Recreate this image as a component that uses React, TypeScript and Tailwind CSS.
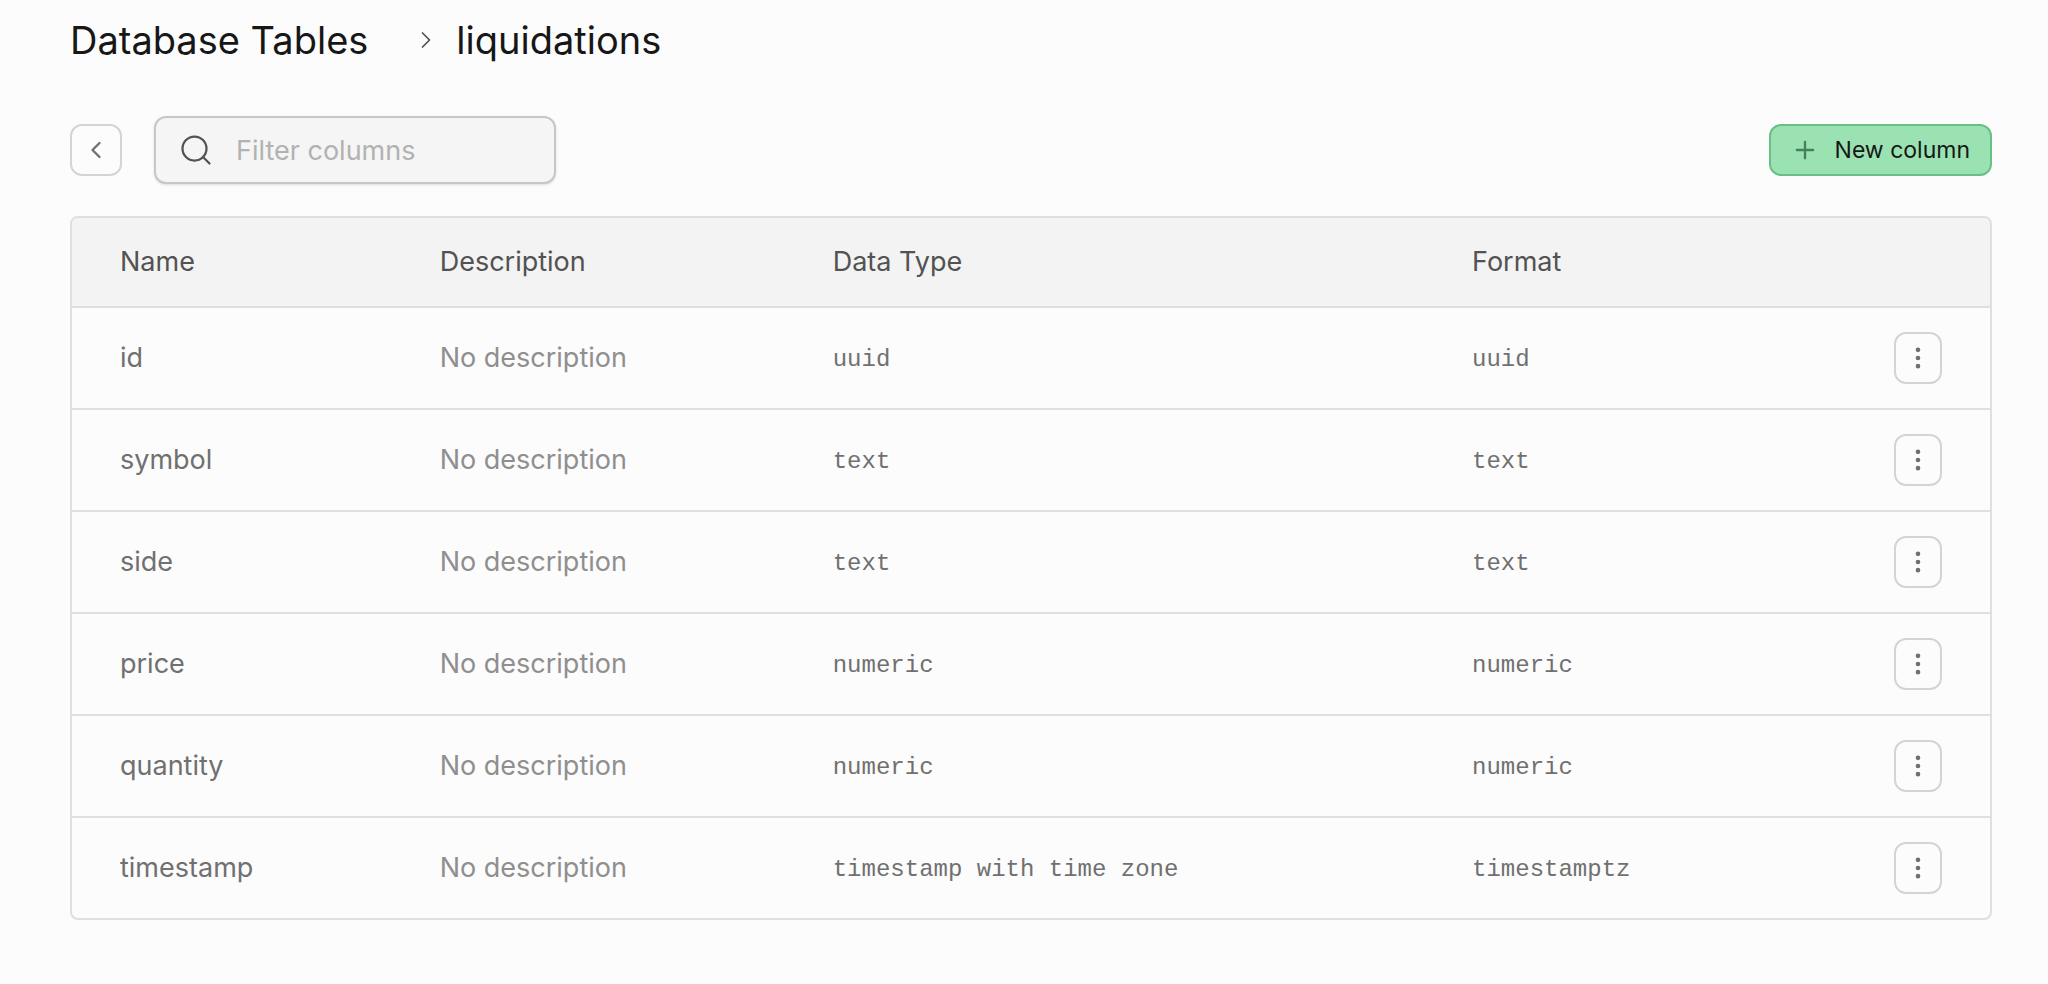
import { ChangeEvent, useState } from "react";
import {
  ChevronLeft,
  ChevronRight,
  EllipsisVertical,
  Plus,
  Search,
} from "lucide-react";

interface Column {
  name: string;
  description?: string;
  dataType: string;
  format: string;
}

const columns: Column[] = [
  { name: "id", dataType: "uuid", format: "uuid" },
  { name: "symbol", dataType: "text", format: "text" },
  { name: "side", dataType: "text", format: "text" },
  { name: "price", dataType: "numeric", format: "numeric" },
  { name: "quantity", dataType: "numeric", format: "numeric" },
  {
    name: "timestamp",
    dataType: "timestamp with time zone",
    format: "timestamptz",
  },
];

function Breadcrumb() {
  return (
    <nav className="flex items-center text-[38px] leading-[48px] text-[#171717]">
      <a href="#">Database Tables</a>
      <ChevronRight
        size={28}
        strokeWidth={1.5}
        className="ml-11 mr-4 text-[#525252]"
      />
      <h1>liquidations</h1>
    </nav>
  );
}

interface ToolbarProps {
  filter: string;
  onFilterChange: (value: string) => void;
}

function Toolbar({ filter, onFilterChange }: ToolbarProps) {
  return (
    <div className="mt-[52px] flex items-center justify-between">
      <div className="flex items-center gap-8">
        <button
          type="button"
          aria-label="Back to tables"
          className="flex size-[52px] items-center justify-center rounded-xl border-2 border-[#d4d4d4] text-[#707070]"
        >
          <ChevronLeft size={28} strokeWidth={2} />
        </button>
        <div className="relative">
          <Search
            size={36}
            strokeWidth={1.5}
            className="pointer-events-none absolute left-6 top-4 text-[#525252]"
          />
          <input
            type="text"
            aria-label="Filter columns"
            placeholder="Filter columns"
            value={filter}
            onChange={(event: ChangeEvent<HTMLInputElement>) => {
              onFilterChange(event.target.value);
            }}
            className="h-[68px] w-[402px] rounded-xl border-2 border-[#c7c7c7] bg-[#f5f5f5] pl-20 pr-6 text-[27px] text-[#171717] shadow-sm placeholder:text-[#b2b2b2] focus:outline-none"
          />
        </div>
      </div>
      <button
        type="button"
        className="flex h-[52px] items-center gap-4 rounded-xl border-2 border-[#6bbf86] bg-[#9ae2b1] px-5 text-[23px] text-[#171717]"
      >
        <Plus size={28} strokeWidth={2} className="text-[#45805a]" />
        New column
      </button>
    </div>
  );
}

function ColumnRow({ column }: { column: Column }) {
  return (
    <tr>
      <td className="border-t-2 border-[#dfdfdf] px-12 py-6 text-[#707070]">
        {column.name}
      </td>
      <td className="border-t-2 border-[#dfdfdf] px-12 py-6 text-[#8f8f8f]">
        {column.description ?? "No description"}
      </td>
      <td className="border-t-2 border-[#dfdfdf] px-12 py-6">
        <code className="font-['Liberation_Mono',monospace] text-2xl leading-[40px] text-[#707070]">
          {column.dataType}
        </code>
      </td>
      <td className="border-t-2 border-[#dfdfdf] px-12 py-6">
        <code className="font-['Liberation_Mono',monospace] text-2xl leading-[40px] text-[#707070]">
          {column.format}
        </code>
      </td>
      <td className="border-t-2 border-[#dfdfdf] px-12 py-6">
        <button
          type="button"
          aria-label={`Actions for ${column.name}`}
          className="flex h-[52px] w-12 items-center justify-center rounded-xl border-2 border-[#d4d4d4] text-[#707070]"
        >
          <EllipsisVertical size={28} strokeWidth={2} />
        </button>
      </td>
    </tr>
  );
}

export default function App() {
  const [filter, setFilter] = useState("");

  const visibleColumns = columns.filter((column) =>
    column.name.includes(filter.toLowerCase())
  );

  return (
    <main className="min-h-screen bg-[#fcfcfc] pb-10 pl-[70px] pr-14 pt-4 font-['Inter',sans-serif]">
      <Breadcrumb />
      <Toolbar filter={filter} onFilterChange={setFilter} />
      <div className="mt-8 overflow-hidden rounded-lg border-2 border-[#dfdfdf]">
        <table className="w-full table-fixed border-separate border-spacing-0 text-left text-[27px] leading-[40px]">
          <thead className="bg-[#f3f3f3] text-[#525252]">
            <tr>
              <th className="w-1/6 px-12 py-6 font-normal">Name</th>
              <th className="px-12 py-6 font-normal">Description</th>
              <th className="w-1/3 px-12 py-6 font-normal">Data Type</th>
              <th className="w-[22%] px-12 py-6 font-normal">Format</th>
              <th className="w-36 px-12 py-6" />
            </tr>
          </thead>
          <tbody>
            {visibleColumns.map((column) => (
              <ColumnRow key={column.name} column={column} />
            ))}
          </tbody>
        </table>
      </div>
    </main>
  );
}
